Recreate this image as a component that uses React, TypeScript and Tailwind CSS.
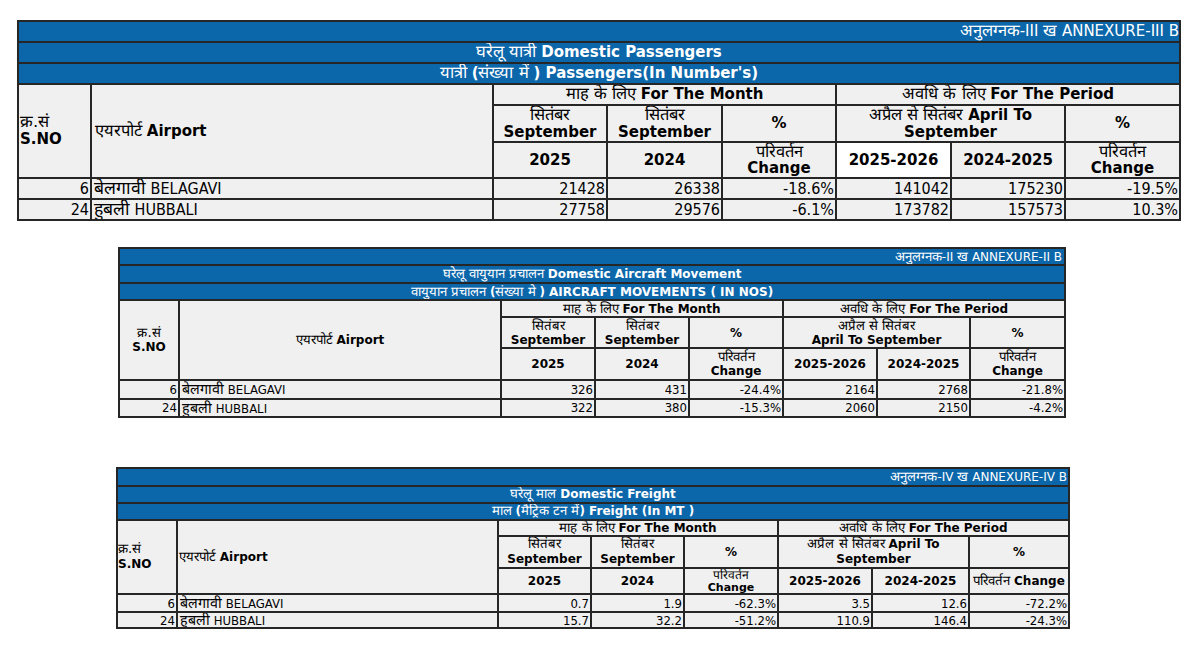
import React from "react";

const HEAD = "font-['DejaVu_Sans','Liberation_Sans',sans-serif]";
const DATA = "font-['DejaVu_Sans_Condensed','DejaVu_Sans','Liberation_Sans',sans-serif]";

function B({ children }: { children: React.ReactNode }) {
  return <span className="font-bold">{children}</span>;
}

// Devanagari fallback renders small, bump it a little
function H({ children }: { children: React.ReactNode }) {
  return <span className="text-[1.1em] leading-none">{children}</span>;
}

function Cell({
  children,
  className = "",
  bg = "bg-[#f0f0f0]",
}: {
  children?: React.ReactNode;
  className?: string;
  bg?: string;
}) {
  return (
    <div className={`${bg} flex items-center overflow-hidden ${className}`}>
      <div className="w-full">{children}</div>
    </div>
  );
}

function Blue({ children, className = "" }: { children?: React.ReactNode; className?: string }) {
  return (
    <div className={`col-span-8 bg-[#0c66aa] text-white flex items-center overflow-hidden whitespace-nowrap ${className}`}>
      <div className="w-full">{children}</div>
    </div>
  );
}

type Row = { no: string; hi: string; en: string; vals: string[] };

function DataRows({ rows, size }: { rows: Row[]; size: string }) {
  return (
    <>
      {rows.map((r) => (
        <React.Fragment key={r.no}>
          <Cell className={`${DATA} ${size} text-right pr-[1px]`}>{r.no}</Cell>
          <Cell className={`${DATA} ${size} pl-[2px] whitespace-nowrap`}>
            <H>{r.hi}</H> {r.en}
          </Cell>
          {r.vals.map((v, i) => (
            <Cell key={i} className={`${DATA} ${size} text-right pr-[1px]`}>
              {v}
            </Cell>
          ))}
        </React.Fragment>
      ))}
    </>
  );
}

const passengers: Row[] = [
  { no: "6", hi: "बेलगावी", en: "BELAGAVI", vals: ["21428", "26338", "-18.6%", "141042", "175230", "-19.5%"] },
  { no: "24", hi: "हुबली", en: "HUBBALI", vals: ["27758", "29576", "-6.1%", "173782", "157573", "10.3%"] },
];

const aircraft: Row[] = [
  { no: "6", hi: "बेलगावी", en: "BELAGAVI", vals: ["326", "431", "-24.4%", "2164", "2768", "-21.8%"] },
  { no: "24", hi: "हुबली", en: "HUBBALI", vals: ["322", "380", "-15.3%", "2060", "2150", "-4.2%"] },
];

const freight: Row[] = [
  { no: "6", hi: "बेलगावी", en: "BELAGAVI", vals: ["0.7", "1.9", "-62.3%", "3.5", "12.6", "-72.2%"] },
  { no: "24", hi: "हुबली", en: "HUBBALI", vals: ["15.7", "32.2", "-51.2%", "110.9", "146.4", "-24.3%"] },
];

function PassengerTable() {
  return (
    <div
      className={`${HEAD} ml-[17px] mt-[20px] w-max grid grid-cols-[71px_400px_112px_113px_112px_113px_112px_113px] grid-rows-[19px_19px_19px_19px_35px_34px_19px_19px] gap-[2px] p-[2px] bg-[#262626] text-[15px] leading-[17px] text-black`}
    >
      <Blue className="text-right">
        <H>अनुलग्नक</H>-III <H>ख</H> ANNEXURE-III B
      </Blue>
      <Blue className="text-center">
        <H>घरेलू यात्री</H> <B>Domestic Passengers</B>
      </Blue>
      <Blue className="text-center">
        <H>यात्री</H> <B>(</B>
        <H>संख्या में</H> <B>) Passengers(In Number's)</B>
      </Blue>

      <Cell className="row-span-3 pl-[1px]">
        <H>क्र.सं</H>
        <br />
        <B>S.NO</B>
      </Cell>
      <Cell className="row-span-3 pl-[3px]">
        <H>एयरपोर्ट</H> <B>Airport</B>
      </Cell>
      <Cell className="col-span-3 text-center">
        <H>माह के लिए</H> <B>For The Month</B>
      </Cell>
      <Cell className="col-span-3 text-center">
        <H>अवधि के लिए</H> <B>For The Period</B>
      </Cell>

      <Cell className="text-center">
        <H>सितंबर</H>
        <br />
        <B>September</B>
      </Cell>
      <Cell className="text-center">
        <H>सितंबर</H>
        <br />
        <B>September</B>
      </Cell>
      <Cell className="text-center">
        <B>%</B>
      </Cell>
      <Cell className="col-span-2 text-center">
        <H>अप्रैल से सितंबर</H> <B>April To</B>
        <br />
        <B>September</B>
      </Cell>
      <Cell className="text-center">
        <B>%</B>
      </Cell>

      <Cell className="text-center">
        <B>2025</B>
      </Cell>
      <Cell className="text-center">
        <B>2024</B>
      </Cell>
      <Cell className="text-center leading-[16px]">
        <H>परिवर्तन</H>
        <br />
        <B>Change</B>
      </Cell>
      <Cell className="text-center" bg="bg-white">
        <B>2025-2026</B>
      </Cell>
      <Cell className="text-center">
        <B>2024-2025</B>
      </Cell>
      <Cell className="text-center leading-[16px]">
        <H>परिवर्तन</H>
        <br />
        <B>Change</B>
      </Cell>

      <DataRows rows={passengers} size="text-[16px]" />
    </div>
  );
}

function AircraftTable() {
  return (
    <div
      className={`${HEAD} ml-[118px] mt-[26px] w-max grid grid-cols-[58px_320px_92px_92px_92px_92px_91px_93px] grid-rows-[15px_16px_15px_15px_29px_30px_17px_16px] gap-[2px] p-[2px] bg-[#262626] text-[12px] leading-[14px] text-black`}
    >
      <Blue className="text-right pr-[2px]">
        <H>अनुलग्नक</H>-II <H>ख</H> ANNEXURE-II B
      </Blue>
      <Blue className="text-center">
        <H>घरेलू वायुयान प्रचालन</H> <B>Domestic Aircraft Movement</B>
      </Blue>
      <Blue className="text-center">
        <H>वायुयान प्रचालन</H> <B>(</B>
        <H>संख्या मे</H> <B>) AIRCRAFT MOVEMENTS ( IN NOS)</B>
      </Blue>

      <Cell className="row-span-3 text-center">
        <H>क्र.सं</H>
        <br />
        <B>S.NO</B>
      </Cell>
      <Cell className="row-span-3 text-center">
        <H>एयरपोर्ट</H> <B>Airport</B>
      </Cell>
      <Cell className="col-span-3 text-center">
        <H>माह के लिए</H> <B>For The Month</B>
      </Cell>
      <Cell className="col-span-3 text-center">
        <H>अवधि के लिए</H> <B>For The Period</B>
      </Cell>

      <Cell className="text-center">
        <H>सितंबर</H>
        <br />
        <B>September</B>
      </Cell>
      <Cell className="text-center">
        <H>सितंबर</H>
        <br />
        <B>September</B>
      </Cell>
      <Cell className="text-center">
        <B>%</B>
      </Cell>
      <Cell className="col-span-2 text-center">
        <H>अप्रैल से सितंबर</H>
        <br />
        <B>April To September</B>
      </Cell>
      <Cell className="text-center">
        <B>%</B>
      </Cell>

      <Cell className="text-center">
        <B>2025</B>
      </Cell>
      <Cell className="text-center">
        <B>2024</B>
      </Cell>
      <Cell className="text-center">
        <H>परिवर्तन</H>
        <br />
        <B>Change</B>
      </Cell>
      <Cell className="text-center">
        <B>2025-2026</B>
      </Cell>
      <Cell className="text-center">
        <B>2024-2025</B>
      </Cell>
      <Cell className="text-center">
        <H>परिवर्तन</H>
        <br />
        <B>Change</B>
      </Cell>

      <DataRows rows={aircraft} size="text-[13px]" />
    </div>
  );
}

function FreightTable() {
  return (
    <div
      className={`${HEAD} ml-[116px] mt-[49px] w-max grid grid-cols-[58px_319px_91px_91px_92px_92px_95px_98px] grid-rows-[16px_15px_15px_14px_30px_24px_16px_14px] gap-[2px] p-[2px] bg-[#262626] text-[12px] leading-[15px] text-black`}
    >
      <Blue className="text-right pr-[1px]">
        <H>अनुलग्नक</H>-IV <H>ख</H> ANNEXURE-IV B
      </Blue>
      <Blue className="text-center">
        <H>घरेलू माल</H> <B>Domestic Freight</B>
      </Blue>
      <Blue className="text-center">
        <H>माल</H> <B>(</B>
        <H>मैट्रिक टन में</H>
        <B>) Freight (In MT )</B>
      </Blue>

      <Cell className="row-span-3">
        <H>क्र.सं</H>
        <br />
        <B>S.NO</B>
      </Cell>
      <Cell className="row-span-3 pl-[1px]">
        <H>एयरपोर्ट</H> <B>Airport</B>
      </Cell>
      <Cell className="col-span-3 text-center leading-[14px]">
        <H>माह के लिए</H> <B>For The Month</B>
      </Cell>
      <Cell className="col-span-3 text-center leading-[14px]">
        <H>अवधि के लिए</H> <B>For The Period</B>
      </Cell>

      <Cell className="text-center">
        <H>सितंबर</H>
        <br />
        <B>September</B>
      </Cell>
      <Cell className="text-center">
        <H>सितंबर</H>
        <br />
        <B>September</B>
      </Cell>
      <Cell className="text-center">
        <B>%</B>
      </Cell>
      <Cell className="col-span-2 text-center">
        <H>अप्रैल से सितंबर</H> <B>April To</B>
        <br />
        <B>September</B>
      </Cell>
      <Cell className="text-center">
        <B>%</B>
      </Cell>

      <Cell className="text-center">
        <B>2025</B>
      </Cell>
      <Cell className="text-center">
        <B>2024</B>
      </Cell>
      <Cell className="text-center text-[11px] leading-[11px]">
        <H>परिवर्तन</H>
        <br />
        <B>Change</B>
      </Cell>
      <Cell className="text-center">
        <B>2025-2026</B>
      </Cell>
      <Cell className="text-center">
        <B>2024-2025</B>
      </Cell>
      <Cell className="text-center whitespace-nowrap">
        <H>परिवर्तन</H> <B>Change</B>
      </Cell>

      <DataRows rows={freight} size="text-[13px]" />
    </div>
  );
}

export default function App() {
  return (
    <div className="w-[1200px] h-[654px] bg-white overflow-hidden flex flex-col">
      <PassengerTable />
      <AircraftTable />
      <FreightTable />
    </div>
  );
}
